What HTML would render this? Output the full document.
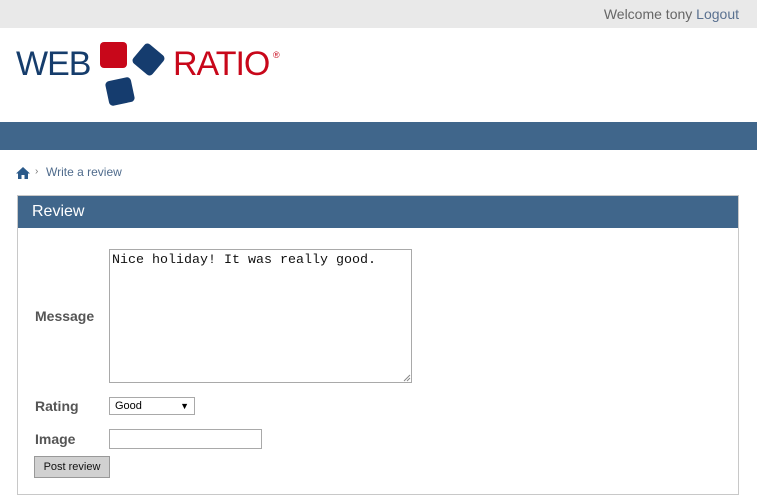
<!DOCTYPE html>
<html><head><meta charset="utf-8"><style>
*{margin:0;padding:0;box-sizing:border-box}
body{width:757px;height:499px;overflow:hidden;background:#fff;font-family:"Liberation Sans",Arial,sans-serif;position:relative}
.top{position:absolute;left:0;top:0;width:757px;height:28px;background:#e9e9e9;color:#666;font-size:14px;line-height:28px;text-align:right;padding-right:18px}
.top span{color:#5a7190}
.bar{position:absolute;left:0;top:122px;width:757px;height:28px;background:#40668b}
.abs{position:absolute}
.bc{position:absolute;left:46px;top:165px;font-size:12px;color:#4f6b8c}
.panel{position:absolute;left:17px;top:195px;width:722px;height:300px;border:1px solid #c8c8c8}
.ph{height:32px;background:#40668b;color:#fff;font-size:16px;line-height:32px;padding-left:14px}
.lbl{position:absolute;font-weight:bold;font-size:14px;color:#555}
</style></head><body>
<div class="top">Welcome tony <span>Logout</span></div>
<div class="abs" style="left:16px;top:46px;font-size:34px;color:#163d6c;letter-spacing:-1px;line-height:36px">WEB</div>
<div class="abs" style="left:100px;top:42px;width:27px;height:26px;background:#c8071a;border-radius:4px"></div>
<div class="abs" style="left:136px;top:47px;width:25px;height:25px;background:#153c6e;border-radius:4px;transform:rotate(40deg)"></div>
<div class="abs" style="left:107px;top:79px;width:26px;height:25px;background:#153c6e;border-radius:4px;transform:rotate(-12deg)"></div>
<div class="abs" style="left:173px;top:46px;font-size:34px;color:#c8071a;letter-spacing:-1px;line-height:36px">RATIO</div>
<div class="abs" style="left:273px;top:50px;font-size:9px;color:#c8071a">®</div>
<div class="bar"></div>
<svg class="abs" style="left:16px;top:167px" width="14" height="12" viewBox="0 0 14 12"><path d="M7 0L0 6.5h2V12h3.5V8h3v4H12V6.5h2z" fill="#2b5a8a"/></svg>
<div class="abs" style="left:35px;top:166px;font-size:10px;color:#777">›</div>
<div class="bc">Write a review</div>
<div class="panel"><div class="ph">Review</div></div>
<div class="lbl" style="left:35px;top:308px">Message</div>
<div class="abs" style="left:109px;top:249px;width:303px;height:134px;border:1px solid #a9a9a9;font-family:'Liberation Mono','Courier New',monospace;font-size:13.33px;padding:3px 2px;color:#111">Nice holiday! It was really good.</div>
<svg class="abs" style="left:402px;top:373px" width="9" height="9"><path d="M8 2L2 8M8 5L5 8" stroke="#888"/></svg>
<div class="lbl" style="left:35px;top:398px">Rating</div>
<div class="abs" style="left:109px;top:397px;width:86px;height:18px;border:1px solid #a9a9a9;font-size:11px;line-height:16px;padding-left:5px;color:#000">Good<span style="position:absolute;right:5px;font-size:9px">▼</span></div>
<div class="lbl" style="left:35px;top:431px">Image</div>
<div class="abs" style="left:109px;top:429px;width:153px;height:20px;border:1px solid #a9a9a9"></div>
<div class="abs" style="left:34px;top:456px;width:76px;height:22px;border:1px solid #999;background:#d1d1d1;font-size:11px;line-height:20px;text-align:center;color:#111">Post review</div>
</body></html>
